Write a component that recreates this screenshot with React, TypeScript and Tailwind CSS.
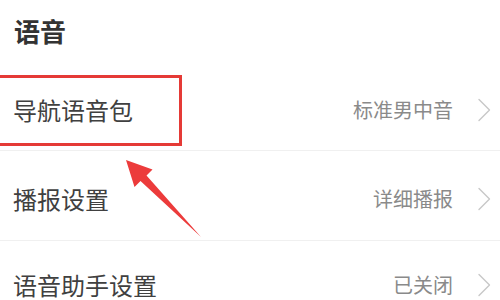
import React from "react";

const font = { fontFamily: '"Noto Sans CJK SC", "Noto Sans", sans-serif' };

function Chevron() {
  return (
    <svg width="14" height="24" viewBox="0 0 14 24" className="shrink-0">
      <path d="M2 1.5 L12.5 12 L2 22.5" fill="none" stroke="#c8c8c8" strokeWidth="1.4" strokeLinecap="round" strokeLinejoin="round" />
    </svg>
  );
}

function Row({ label, value, h, border }: { label: string; value: string; h: string; border?: boolean }) {
  return (
    <div className={`flex items-center justify-between pl-[13px] pr-[9px] ${h} ${border ? "border-b border-[#f0f0f0]" : ""}`}>
      <span className="text-[24px] leading-none text-[#404040]">{label}</span>
      <div className="flex items-center gap-[24px]">
        <span className="text-[20px] leading-none text-[#8a8a8a]">{value}</span>
        <Chevron />
      </div>
    </div>
  );
}

export default function App() {
  return (
    <div className="relative w-[500px] h-[300px] overflow-hidden bg-white" style={font}>
      <div className="h-[70px] pl-[14px] pt-[16px]">
        <span className="text-[26px] leading-[30px] font-bold text-[#333333]">语音</span>
      </div>
      <Row label="导航语音包" value="标准男中音" h="h-[81px]" border />
      <Row label="播报设置" value="详细播报" h="h-[90px] pt-[6px]" border />
      <Row label="语音助手设置" value="已关闭" h="h-[88px]" />

      <div className="absolute left-[-3px] top-[75px] w-[185px] h-[71px] border-[3px] border-[#e53a36]" />
      <svg className="absolute left-0 top-0" width="500" height="300" viewBox="0 0 500 300">
        <polygon
          points="126,160 152.5,169.5 146.5,175.5 201,237 140.5,181 134.5,187"
          fill="#ec3b3b"
        />
      </svg>
    </div>
  );
}
